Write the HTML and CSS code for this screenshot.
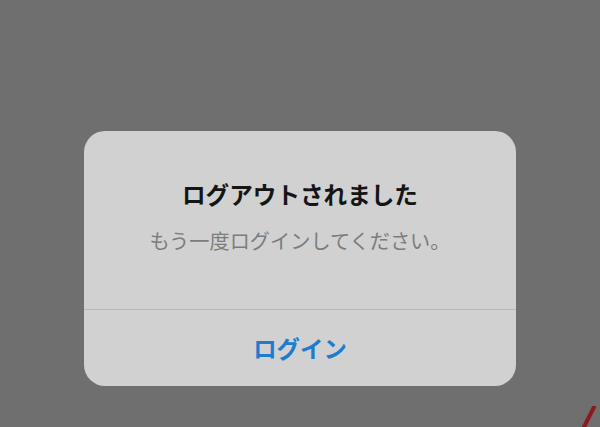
FILE: index.html
```html
<!DOCTYPE html>
<html lang="ja">
<head>
<meta charset="utf-8">
<link rel="stylesheet" href="styles.css">
</head>
<body>
<div class="screen">
  <div class="alert">
    <div class="alert-body">
      <div class="alert-title">ログアウトされました</div>
      <div class="alert-message">もう一度ログインしてください。</div>
    </div>
    <div class="alert-action">ログイン</div>
  </div>
  <svg class="pen-mark" width="30" height="30" viewBox="0 0 30 30">
    <line x1="22" y1="1" x2="12" y2="21" stroke="#8a1a1f" stroke-width="4" stroke-linecap="round"/>
  </svg>
</div>
</body>
</html>
```
FILE: styles.css
```css
html, body {
  margin: 0;
  padding: 0;
}
body {
  background: #6f6f6f;
  font-family: "Noto Sans CJK JP", "Noto Sans", sans-serif;
}
.screen {
  position: relative;
  width: 600px;
  height: 427px;
  overflow: hidden;
  padding-top: 131px;
  box-sizing: border-box;
}
.alert {
  width: 432px;
  height: 255px;
  margin: 0 auto;
  background: #d1d1d1;
  border-radius: 21px;
  display: flex;
  flex-direction: column;
  overflow: hidden;
}
.alert-body {
  height: 179px;
  box-sizing: border-box;
  padding-top: 47px;
  text-align: center;
  border-bottom: 1px solid #b9b9b9;
}
.alert-title {
  font-size: 23.6px;
  font-weight: 700;
  line-height: 32px;
  color: #151515;
}
.alert-message {
  margin-top: 16px;
  font-size: 20.2px;
  line-height: 30px;
  color: #7c7c7c;
}
.alert-action {
  flex: 1;
  display: flex;
  align-items: center;
  justify-content: center;
  font-size: 23.4px;
  font-weight: 700;
  color: #1d7ccf;
}
.pen-mark {
  position: absolute;
  left: 572px;
  top: 406px;
}
```
